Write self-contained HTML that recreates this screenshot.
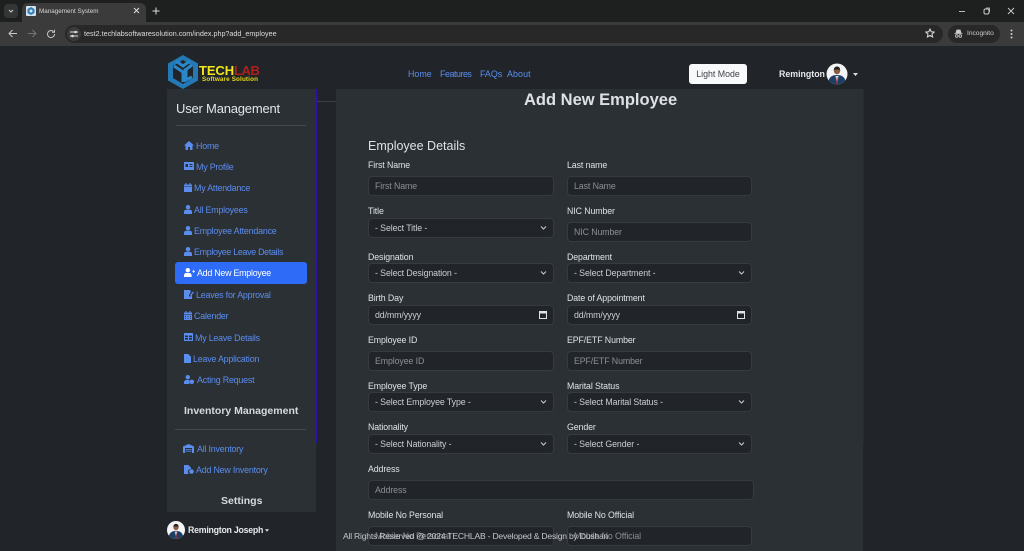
<!DOCTYPE html>
<html><head><meta charset="utf-8"><title>Management System</title>
<style>
html,body{margin:0;padding:0;width:1024px;height:551px;overflow:hidden;background:#212529}
body{position:relative;font-family:"Liberation Sans",sans-serif;font-size:9px;color:#dee2e6;filter:blur(.3px)}
div,span,svg{position:absolute}
.t{white-space:nowrap;line-height:12px;height:12px}
.lb{color:#dee2e6;font-size:8.8px;letter-spacing:-.1px}
.f{background:#212529;border:1px solid #363b41;border-radius:4px;box-sizing:border-box;height:20px}
.ph{color:#8a9097;font-size:8.8px;letter-spacing:-.1px;white-space:nowrap;line-height:12px;left:6px;top:3px}
.sel{color:#c9ced3}
.nv{color:#5b8def;font-size:8.9px;letter-spacing:-.2px}
.top{letter-spacing:0}
.ic{fill:#5b8def}
</style></head><body>

<!-- browser chrome -->
<div style="left:0;top:0;width:1024px;height:22px;background:#1e1f1f"></div>
<div style="left:0;top:22px;width:1024px;height:24px;background:#3b3b3b"></div>
<div style="left:4px;top:4px;width:14px;height:14px;border-radius:4px;background:#343535"></div>
<svg style="left:8px;top:8px" width="6" height="6" viewBox="0 0 6 6"><path d="M1 2l2 2 2-2" fill="none" stroke="#ccc" stroke-width="1"/></svg>
<div style="left:22px;top:3px;width:124px;height:19px;background:#3b3b3b;border-radius:6px 6px 0 0"></div>
<svg style="left:26px;top:6px" width="10" height="10" viewBox="0 0 10 10"><rect width="10" height="10" fill="#d5e3ee" rx="1"/><path d="M5 1l3.500 2v4L5 9 1.500 7V3z" fill="#2f7fb8"/><circle cx="5" cy="5" r="1.500" fill="#d5e3ee"/></svg>
<div class="t" style="left:39px;top:6px;font-size:6.300px;color:#d6d6d6">Management System</div>
<svg style="left:133px;top:7px" width="7" height="7" viewBox="0 0 7 7"><path d="M1 1l5 5M6 1L1 6" stroke="#ddd" stroke-width="1"/></svg>
<svg style="left:152px;top:7px" width="8" height="8" viewBox="0 0 8 8"><path d="M4 .5v7M.5 4h7" stroke="#ddd" stroke-width="1"/></svg>
<svg style="left:8px;top:29px" width="10" height="9" viewBox="0 0 10 9"><path d="M9 4.500H1.500M4.500 1L1 4.500 4.500 8" fill="none" stroke="#c8c8c8" stroke-width="1"/></svg>
<svg style="left:27px;top:29px" width="10" height="9" viewBox="0 0 10 9"><path d="M1 4.500h7.500M5.500 1L9 4.500 5.500 8" fill="none" stroke="#777" stroke-width="1"/></svg>
<svg style="left:46px;top:29px" width="10" height="10" viewBox="0 0 10 10"><path d="M8.500 5A3.500 3.500 0 1 1 7.400 2.500M8.500 .8v2.500H6" fill="none" stroke="#c8c8c8" stroke-width="1"/></svg>
<div style="left:65px;top:25px;width:878px;height:18px;border-radius:9px;background:#282828"></div>
<div style="left:67px;top:27px;width:14px;height:14px;border-radius:7px;background:#3b3b3b"></div>
<svg style="left:70px;top:30px" width="8" height="8" viewBox="0 0 8 8"><path d="M0 2h8M0 6h8" stroke="#ddd" stroke-width="1"/><circle cx="5.500" cy="2" r="1.300" fill="#ddd"/><circle cx="2.500" cy="6" r="1.300" fill="#ddd"/></svg>
<div class="t" style="left:84px;top:28px;font-size:7.200px;color:#dcdcdc">test2.techlabsoftwaresolution.com/index.php?add_employee</div>
<svg style="left:925px;top:28px" width="10" height="10" viewBox="0 0 24 24"><path d="M12 2.500l3 6.500 7 .8-5.200 4.700 1.500 7L12 17.900 5.700 21.500l1.500-7L2 9.800l7-.8z" fill="none" stroke="#ddd" stroke-width="2.400"/></svg>
<div style="left:948px;top:25px;width:52px;height:18px;border-radius:9px;background:#282828"></div>
<svg style="left:954px;top:29px" width="9" height="9" viewBox="0 0 9 9"><path d="M2 4l.8-3h3.400L7 4zM0.500 4.500h8" fill="#ccc" stroke="#ccc" stroke-width=".7"/><circle cx="2.700" cy="7" r="1.300" fill="none" stroke="#ccc" stroke-width=".8"/><circle cx="6.300" cy="7" r="1.300" fill="none" stroke="#ccc" stroke-width=".8"/></svg>
<div class="t" style="left:967px;top:28px;font-size:6.600px;color:#cfcfcf">Incognito</div>
<svg style="left:1010px;top:29px" width="3" height="10" viewBox="0 0 3 10"><circle cx="1.500" cy="1.500" r="1" fill="#ccc"/><circle cx="1.500" cy="5" r="1" fill="#ccc"/><circle cx="1.500" cy="8.500" r="1" fill="#ccc"/></svg>
<div style="left:959px;top:11px;width:6px;height:1px;background:#bbb"></div>
<svg style="left:983px;top:7px" width="8" height="8" viewBox="0 0 8 8"><rect x="1" y="2" width="5" height="5" rx="1.500" fill="none" stroke="#ccc"/><path d="M3 1h3.500V5" fill="none" stroke="#ccc" stroke-width=".8"/></svg>
<svg style="left:1007px;top:7px" width="8" height="8" viewBox="0 0 8 8"><path d="M1 1l6 6M7 1L1 7" stroke="#ccc" stroke-width=".9"/></svg>

<!-- top nav -->
<svg style="left:166px;top:54px" width="34" height="36" viewBox="0 0 34 36">
<path d="M17 1L32 9.500V26.500L17 35 2 26.500V9.500z" fill="#2379b5"/>
<path d="M17 6L27 12V24L17 30 7 24V12z" fill="#212529"/>
<path d="M8 12l9 6 0 10M26 11l-8 6M10 7l7 5 7-5M20 14v12l6-3" fill="none" stroke="#2a88c8" stroke-width="3"/>
</svg>
<div class="t" style="left:199px;top:63px;font-size:13px;line-height:15px;height:15px;font-weight:bold;letter-spacing:-.1px;color:#f4e81c">TECH<span style="position:static;color:#b01f1c;letter-spacing:-.4px">LAB</span></div>
<div class="t" style="left:202px;top:76px;font-size:6.300px;line-height:7px;font-weight:bold;color:#e6d814;letter-spacing:.15px">Software Solution</div>
<div class="t nv top" style="left:408px;top:68px">Home</div>
<div class="t nv top" style="left:440px;top:68px;letter-spacing:-.45px">Features</div>
<div class="t nv top" style="left:480px;top:68px">FAQs</div>
<div class="t nv top" style="left:507px;top:68px;letter-spacing:.1px">About</div>
<div class="t" style="left:689px;top:64px;width:58px;height:20px;line-height:20px;background:#f8f9fa;border-radius:3px;text-align:center;color:#3d4349;font-size:8.800px">Light Mode</div>
<div class="t" style="left:779px;top:68px;font-weight:bold;font-size:8.800px;color:#e6e9ec">Remington</div>
<svg style="left:826px;top:63px" width="22" height="22" viewBox="0 0 22 22"><defs><clipPath id="c1"><circle cx="11" cy="11" r="10.500"/></clipPath></defs><g clip-path="url(#c1)"><rect width="22" height="22" fill="#f4f4f4"/><path d="M2 22c0-7 3-10 9-10s9 3 9 10z" fill="#1d3f66"/><path d="M9.500 13l1.500 9 1.500-9z" fill="#eee"/><path d="M10.600 14h.9l.3 8h-1.500z" fill="#a33"/><circle cx="11" cy="8" r="3.200" fill="#8a5d44"/><path d="M7.800 7.500c0-2.700 1.300-4 3.200-4s3.200 1.300 3.200 4c-1-1.300-5.400-1.300-6.400 0z" fill="#222"/></g></svg>
<svg style="left:853px;top:73px" width="5" height="3" viewBox="0 0 5 3"><path d="M0 0h5L2.500 3z" fill="#dee2e6"/></svg>

<!-- sidebar -->
<div style="left:167px;top:89px;width:149px;height:423px;background:#2b3035"></div>
<div style="left:316px;top:89px;width:1px;height:354px;background:#2c10a8"></div>
<div style="left:317px;top:101px;width:19px;height:1px;background:#3b4046"></div>
<div class="t" style="left:176px;top:101px;font-size:13px;line-height:15px;height:15px;letter-spacing:-.2px;color:#e3e6e9">User Management</div>
<div style="left:176px;top:125px;width:130px;height:1px;background:#454a50"></div>

<svg class="ic" style="left:184px;top:141px" width="10" height="9" viewBox="0 0 10 9"><path d="M5 0L0 4.500h1.500V9h2.500V6h2v3h2.500V4.500H10z"/></svg>
<div class="t nv" style="left:196px;top:140px">Home</div>
<svg class="ic" style="left:184px;top:162px" width="10" height="8" viewBox="0 0 10 8"><path fill-rule="evenodd" d="M0 0h10v8H0zM1.500 2v3h2.500V2zM5.500 2v1h3V2zM5.500 4v1h3V4z"/></svg>
<div class="t nv" style="left:196px;top:161px">My Profile</div>
<svg class="ic" style="left:184px;top:183px" width="8" height="9" viewBox="0 0 8 9"><path d="M0 1.500h8V3.200H0zM0 3.800h8V9H0zM1.500 0h1v1.500h-1zM5.500 0h1v1.500h-1z"/></svg>
<div class="t nv" style="left:194px;top:182px">My Attendance</div>
<svg class="ic" style="left:184px;top:205px" width="8" height="9" viewBox="0 0 8 9"><circle cx="4" cy="2.200" r="2.200"/><path d="M0 9V7c0-1.500 1-2.200 2-2.200h4c1 0 2 .7 2 2.200v2z"/></svg>
<div class="t nv" style="left:194px;top:204px">All Employees</div>
<svg class="ic" style="left:184px;top:226px" width="8" height="9" viewBox="0 0 8 9"><circle cx="4" cy="2.200" r="2.200"/><path d="M0 9V7c0-1.500 1-2.200 2-2.200h4c1 0 2 .7 2 2.200v2z"/></svg>
<div class="t nv" style="left:194px;top:225px">Employee Attendance</div>
<svg class="ic" style="left:184px;top:247px" width="8" height="9" viewBox="0 0 8 9"><circle cx="4" cy="2.200" r="2.200"/><path d="M0 9V7c0-1.500 1-2.200 2-2.200h4c1 0 2 .7 2 2.200v2z"/></svg>
<div class="t nv" style="left:194px;top:246px;letter-spacing:-.3px">Employee Leave Details</div>

<div style="left:175px;top:262px;width:132px;height:22px;background:#2e6bf6;border-radius:3px"></div>
<svg style="left:184px;top:268px" width="11" height="9" viewBox="0 0 11 9" fill="#fff"><circle cx="3.800" cy="2.200" r="2.200"/><path d="M0 9V7.500C0 5.800 1 5 2.200 5h3.200C6.600 5 7.600 5.800 7.600 7.500V9zM8.300 3H9.200V1.800h.7V3H11v.8H9.900V5h-.7V3.800H8.300z"/></svg>
<div class="t" style="left:197px;top:267px;color:#fff;font-size:8.900px;letter-spacing:-.25px">Add New Employee</div>

<svg class="ic" style="left:184px;top:290px" width="10" height="9" viewBox="0 0 10 9"><path d="M0 0h6l1 1.500L5 5v1.500h1.500L8 5v4H0z"/><path d="M6 5l3-3.500 1 .8L7 6z"/></svg>
<div class="t nv" style="left:196px;top:289px">Leaves for Approval</div>
<svg class="ic" style="left:184px;top:311px" width="8" height="9" viewBox="0 0 8 9"><path d="M0 1.500h8V3.200H0zM1.500 0h1v1.500h-1zM5.500 0h1v1.500h-1z"/><path fill-rule="evenodd" d="M0 3.800h8V9H0zM1 4.700v1h1v-1zM3.500 4.700v1h1v-1zM6 4.700v1h1v-1zM1 6.800v1h1v-1zM3.500 6.800v1h1v-1zM6 6.800v1h1v-1z"/></svg>
<div class="t nv" style="left:194px;top:310px">Calender</div>
<svg class="ic" style="left:184px;top:333px" width="9" height="8" viewBox="0 0 9 8"><path fill-rule="evenodd" d="M0 0h9v8H0zM1 2.500v1.800h3V2.500zM5 2.500v1.800h3V2.500zM1 5v1.800h3V5zM5 5v1.800h3V5z"/></svg>
<div class="t nv" style="left:195px;top:332px">My Leave Details</div>
<svg class="ic" style="left:184px;top:354px" width="7" height="9" viewBox="0 0 7 9"><path d="M0 0h4.300L7 2.700V9H0z"/></svg>
<div class="t nv" style="left:193px;top:353px">Leave Application</div>
<svg class="ic" style="left:184px;top:375px" width="10" height="9" viewBox="0 0 10 9"><circle cx="3.800" cy="2.200" r="2.200"/><path d="M0 9V7.500C0 5.800 1 5 2.200 5h3.200L5.500 9z"/><circle cx="7.800" cy="6.800" r="2.200"/></svg>
<div class="t nv" style="left:197px;top:374px">Acting Request</div>

<div class="t" style="left:184px;top:405px;font-size:10.500px;line-height:13px;height:13px;font-weight:bold;color:#d6dade">Inventory Management</div>
<div style="left:175px;top:429px;width:131px;height:1px;background:#454a50"></div>

<svg class="ic" style="left:183px;top:444px" width="11" height="9" viewBox="0 0 11 9"><path fill-rule="evenodd" d="M0 9V2.500L5.500 0 11 2.500V9zM2 4v5h7V4z"/><path d="M2.500 5h6v.8h-6zM2.500 6.800h6v.8h-6z"/></svg>
<div class="t nv" style="left:197px;top:443px">All Inventory</div>
<svg class="ic" style="left:184px;top:465px" width="10" height="9" viewBox="0 0 10 9"><path d="M0 0h4.300L7 2.700V4a2.800 2.800 0 0 0-2 5H0z"/><circle cx="7.500" cy="6.500" r="2.300"/></svg>
<div class="t nv" style="left:196px;top:464px">Add New Inventory</div>
<div class="t" style="left:221px;top:495px;font-size:10.500px;line-height:13px;height:13px;font-weight:bold;color:#d6dade">Settings</div>

<svg style="left:167px;top:521px" width="18" height="18" viewBox="0 0 22 22"><defs><clipPath id="c2"><circle cx="11" cy="11" r="11"/></clipPath></defs><g clip-path="url(#c2)"><rect width="22" height="22" fill="#f4f4f4"/><path d="M2 22c0-7 3-10 9-10s9 3 9 10z" fill="#1d3f66"/><path d="M9.500 13l1.500 9 1.500-9z" fill="#eee"/><path d="M10.600 14h.9l.3 8h-1.500z" fill="#a33"/><circle cx="11" cy="8" r="3.200" fill="#8a5d44"/><path d="M7.800 7.500c0-2.700 1.300-4 3.200-4s3.200 1.300 3.200 4c-1-1.300-5.400-1.300-6.400 0z" fill="#222"/></g></svg>
<div class="t" style="left:188px;top:524px;font-weight:bold;font-size:8.800px;letter-spacing:-.25px;color:#e6e9ec">Remington Joseph</div>
<svg style="left:265px;top:529px" width="4" height="3" viewBox="0 0 5 3"><path d="M0 0h5L2.500 3z" fill="#dee2e6"/></svg>

<!-- main -->
<div style="left:336px;top:89px;width:527px;height:462px;background:#2b3035"></div>
<div style="left:863px;top:89px;width:1px;height:354px;background:#2c10a8"></div>
<div class="t" style="left:524px;top:91px;font-size:16.500px;line-height:19px;height:19px;font-weight:bold;color:#dee2e6">Add New Employee</div>
<div class="t" style="left:368px;top:139px;font-size:12.500px;line-height:15px;height:15px;color:#dee2e6">Employee Details</div>

<div class="t lb" style="left:368px;top:159px">First Name</div>
<div class="t lb" style="left:567px;top:159px">Last name</div>
<div class="f" style="left:368px;top:176px;width:186px"><span class="ph">First Name</span></div>
<div class="f" style="left:567px;top:176px;width:185px"><span class="ph">Last Name</span></div>

<div class="t lb" style="left:368px;top:205px">Title</div>
<div class="t lb" style="left:567px;top:205px">NIC Number</div>
<div class="f" style="left:368px;top:218px;width:186px"><span class="ph sel">- Select Title -</span><svg style="right:6px;top:6px" width="7" height="6" viewBox="0 0 7 6"><path d="M1 1.500l2.500 2.500L6 1.500" fill="none" stroke="#c9ced3"/></svg></div>
<div class="f" style="left:567px;top:222px;width:185px"><span class="ph">NIC Number</span></div>

<div class="t lb" style="left:368px;top:251px">Designation</div>
<div class="t lb" style="left:567px;top:251px">Department</div>
<div class="f" style="left:368px;top:263px;width:186px"><span class="ph sel">- Select Designation -</span><svg style="right:6px;top:6px" width="7" height="6" viewBox="0 0 7 6"><path d="M1 1.500l2.500 2.500L6 1.500" fill="none" stroke="#c9ced3"/></svg></div>
<div class="f" style="left:567px;top:263px;width:185px"><span class="ph sel">- Select Department -</span><svg style="right:6px;top:6px" width="7" height="6" viewBox="0 0 7 6"><path d="M1 1.500l2.500 2.500L6 1.500" fill="none" stroke="#c9ced3"/></svg></div>

<div class="t lb" style="left:368px;top:292px">Birth Day</div>
<div class="t lb" style="left:567px;top:292px">Date of Appointment</div>
<div class="f" style="left:368px;top:305px;width:186px"><span class="ph sel">dd/mm/yyyy</span><svg style="right:6px;top:4px" width="8" height="9" viewBox="0 0 8 9"><path d="M.5 1.500h7v7h-7z" fill="none" stroke="#e0e3e6"/><path d="M0 1h8v2.500H0z" fill="#e0e3e6"/></svg></div>
<div class="f" style="left:567px;top:305px;width:185px"><span class="ph sel">dd/mm/yyyy</span><svg style="right:6px;top:4px" width="8" height="9" viewBox="0 0 8 9"><path d="M.5 1.500h7v7h-7z" fill="none" stroke="#e0e3e6"/><path d="M0 1h8v2.500H0z" fill="#e0e3e6"/></svg></div>

<div class="t lb" style="left:368px;top:334px">Employee ID</div>
<div class="t lb" style="left:567px;top:334px">EPF/ETF Number</div>
<div class="f" style="left:368px;top:351px;width:186px"><span class="ph">Employee ID</span></div>
<div class="f" style="left:567px;top:351px;width:185px"><span class="ph">EPF/ETF Number</span></div>

<div class="t lb" style="left:368px;top:380px">Employee Type</div>
<div class="t lb" style="left:567px;top:380px">Marital Status</div>
<div class="f" style="left:368px;top:392px;width:186px"><span class="ph sel">- Select Employee Type -</span><svg style="right:6px;top:6px" width="7" height="6" viewBox="0 0 7 6"><path d="M1 1.500l2.500 2.500L6 1.500" fill="none" stroke="#c9ced3"/></svg></div>
<div class="f" style="left:567px;top:392px;width:185px"><span class="ph sel">- Select Marital Status -</span><svg style="right:6px;top:6px" width="7" height="6" viewBox="0 0 7 6"><path d="M1 1.500l2.500 2.500L6 1.500" fill="none" stroke="#c9ced3"/></svg></div>

<div class="t lb" style="left:368px;top:421px">Nationality</div>
<div class="t lb" style="left:567px;top:421px">Gender</div>
<div class="f" style="left:368px;top:434px;width:186px"><span class="ph sel">- Select Nationality -</span><svg style="right:6px;top:6px" width="7" height="6" viewBox="0 0 7 6"><path d="M1 1.500l2.500 2.500L6 1.500" fill="none" stroke="#c9ced3"/></svg></div>
<div class="f" style="left:567px;top:434px;width:185px"><span class="ph sel">- Select Gender -</span><svg style="right:6px;top:6px" width="7" height="6" viewBox="0 0 7 6"><path d="M1 1.500l2.500 2.500L6 1.500" fill="none" stroke="#c9ced3"/></svg></div>

<div class="t lb" style="left:368px;top:463px">Address</div>
<div class="f" style="left:368px;top:480px;width:386px"><span class="ph">Address</span></div>

<div class="t lb" style="left:368px;top:509px">Mobile No Personal</div>
<div class="t lb" style="left:567px;top:509px">Mobile No Official</div>
<div class="f" style="left:368px;top:526px;width:186px"><span class="ph">Mobile No Personal</span></div>
<div class="f" style="left:567px;top:526px;width:185px"><span class="ph">Mobile No Official</span></div>

<div class="t" style="left:343px;top:530px;font-size:8.600px;letter-spacing:-.22px;color:#c3c7cb">All Rights Reserved @ 2024 TECHLAB - Developed &amp; Design by Dushan</div>
</body></html>
